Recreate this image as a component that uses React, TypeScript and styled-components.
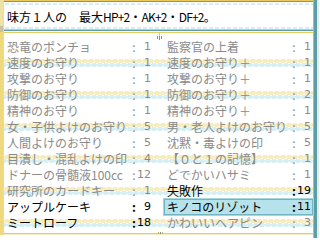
import React from 'react';
import styled, { createGlobalStyle, css } from 'styled-components';

// ---- palette ----
const YELLOW = '#e8cc62';
const TEAL = '#5c9ea6';
const CYAN_DOT = '#d4eef4';
const GREY_TEXT = '#8a8a8a';

const GlobalStyle = createGlobalStyle`
  html, body {
    margin: 0;
    padding: 0;
    background: #ffffff;
  }
  body {
    font-family: "Noto Sans CJK JP", "DejaVu Sans", sans-serif;
  }
`;

type Item = {
  name: string;
  count: number;
  usable?: boolean;
  selected?: boolean;
};

const leftItems: Item[] = [
  { name: '恐竜のポンチョ', count: 1 },
  { name: '速度のお守り', count: 1 },
  { name: '攻撃のお守り', count: 1 },
  { name: '防御のお守り', count: 1 },
  { name: '精神のお守り', count: 1 },
  { name: '女・子供よけのお守り', count: 5 },
  { name: '人間よけのお守り', count: 5 },
  { name: '目潰し・混乱よけの印', count: 4 },
  { name: 'ドナーの骨髄液100cc', count: 12 },
  { name: '研究所のカードキー', count: 1 },
  { name: 'アップルケーキ', count: 9, usable: true },
  { name: 'ミートローフ', count: 18, usable: true },
];

const rightItems: Item[] = [
  { name: '監察官の上着', count: 1 },
  { name: '速度のお守り＋', count: 1 },
  { name: '攻撃のお守り＋', count: 1 },
  { name: '防御のお守り＋', count: 2 },
  { name: '精神のお守り＋', count: 1 },
  { name: '男・老人よけのお守り', count: 5 },
  { name: '沈黙・毒よけの印', count: 5 },
  { name: '【０と１の記憶】', count: 1 },
  { name: 'どでかいハサミ', count: 1 },
  { name: '失敗作', count: 19, usable: true },
  { name: 'キノコのリゾット', count: 11, usable: true, selected: true },
  { name: 'かわいいヘアピン', count: 3 },
];

// ---- frame ----
const Screen = styled.div`
  position: relative;
  width: 320px;
  height: 240px;
  display: flex;
  align-items: flex-start;
  background: #ffffff;
  overflow: hidden;
`;

const LeftRail = styled.div`
  width: 3px;
  height: 235px;
  border-right: 1px solid #d8d8d0;
  display: flex;
  flex-direction: column;
`;

const RailPiece = styled.div<{ $h: number; $color: string }>`
  height: ${p => p.$h}px;
  background: ${p => p.$color};
  flex-shrink: 0;
`;

const RightRail = styled.div`
  width: 3px;
  height: 238px;
  background: ${TEAL};
  border-left: 1px solid #8cc4c8;
  border-right: 2px solid #e2eaea;
`;

const Main = styled.div`
  width: 309px;
  display: flex;
  flex-direction: column;
`;

const dotted = css`
  background-image: radial-gradient(2.5px 1.5px at 3px 1px, ${CYAN_DOT} 80%, transparent 100%);
  background-size: 6px 2px;
  background-repeat: repeat-x;
`;

const Line = styled.div<{ $color: string }>`
  height: 1px;
  background: ${p => p.$color};
`;

const Dots = styled.div`
  height: 2px;
  ${dotted}
`;

const HelpBox = styled.div`
  height: 22px;
  display: flex;
  align-items: center;
  padding-left: 3px;
  font-size: 12px;
  color: #000;
  white-space: pre;
`;

const Half = styled.span`
  letter-spacing: -0.8px;
`;

// ---- list ----
const List = styled.div`
  position: relative;
  padding: 6px 0 2px;
  display: flex;
  flex-direction: column;
  border-bottom: 1px solid ${YELLOW};
  box-shadow: 0 1px 0 #f5ecc6;
`;

const Band = styled.div<{ $striped: boolean }>`
  height: 16px;
  display: grid;
  grid-template-columns: 149px 149px;
  column-gap: 11px;
  ${p =>
    p.$striped &&
    css`
      background-image:
        radial-gradient(3.4px 2.4px at 3px 3px, #f6ecbc 75%, transparent 100%),
        radial-gradient(3.4px 2.4px at 0px 7px, #d6eff5 75%, transparent 100%),
        radial-gradient(3.4px 2.4px at 6px 7px, #d6eff5 75%, transparent 100%);
      background-size: 6px 10px;
      background-repeat: repeat-x;
      background-position: 0 3px;
    `}
`;

const Entry = styled.div<{ $usable: boolean; $selected: boolean }>`
  box-sizing: border-box;
  height: 16px;
  display: flex;
  align-items: center;
  padding: 0 2px 0 3px;
  font-size: 12px;
  line-height: 16px;
  white-space: nowrap;
  color: ${p => (p.$usable ? '#000' : GREY_TEXT)};
  ${p =>
    p.$selected &&
    css`
      background: #b6e3eb;
      box-shadow: inset 0 0 0 1px #6fb6c2, 0 0 0 1px #a4d6de;
    `}
`;

const Name = styled.span`
  flex: 1;
  overflow: hidden;
`;

const Colon = styled.span<{ $usable: boolean }>`
  width: 6px;
  text-align: center;
  font-weight: ${p => (p.$usable ? 700 : 400)};
`;

const Count = styled.span`
  width: 14px;
  text-align: right;
  font-family: "DejaVu Sans", sans-serif;
  font-size: 11px;
`;

const TopMark = styled.svg`
  position: absolute;
  left: 153px;
  top: 0;
`;

const BottomMark = styled.svg`
  position: absolute;
  left: 152px;
  bottom: -2px;
`;

const Row: React.FC<{ item: Item }> = ({ item }) => (
  <Entry $usable={!!item.usable} $selected={!!item.selected}>
    <Name>{item.name}</Name>
    <Colon $usable={!!item.usable}>:</Colon>
    <Count>{item.count}</Count>
  </Entry>
);

export default function App() {
  return (
    <>
      <GlobalStyle />
      <Screen>
        <LeftRail>
          <RailPiece $h={26} $color="#efe2a6" />
          <RailPiece $h={6} $color="#c9c2a2" />
          <RailPiece $h={203} $color="#efd97c" />
        </LeftRail>
        <Main>
          <Line $color={YELLOW} />
          <Line $color={TEAL} />
          <Line $color="#ffffff" />
          <Dots />
          <HelpBox>
            味方１人の　最大<Half>HP+2</Half>・<Half>AK+2</Half>・<Half>DF+2</Half>。
          </HelpBox>
          <Dots />
          <Line $color={YELLOW} />
          <Line $color={TEAL} />
          <Line $color="#ffffff" />
          <Line $color={YELLOW} />
          <List>
            <TopMark width="5" height="7" viewBox="0 0 5 7">
              <rect x="0" y="3" width="1" height="3" fill={TEAL} />
              <rect x="2" y="0" width="1" height="3" fill={YELLOW} />
              <rect x="2" y="3" width="1" height="4" fill={TEAL} />
              <rect x="4" y="3" width="1" height="3" fill={TEAL} />
            </TopMark>
            {leftItems.map((item, i) => (
              <Band key={i} $striped={i % 2 === 1}>
                <Row item={item} />
                <Row item={rightItems[i]} />
              </Band>
            ))}
            <BottomMark width="9" height="3" viewBox="0 0 9 3">
              <rect x="2" y="0" width="1" height="2" fill="#d8b040" />
              <rect x="4" y="0" width="1" height="2" fill={TEAL} />
              <rect x="6" y="0" width="1" height="2" fill="#d8b040" />
            </BottomMark>
          </List>
        </Main>
        <RightRail />
      </Screen>
    </>
  );
}
